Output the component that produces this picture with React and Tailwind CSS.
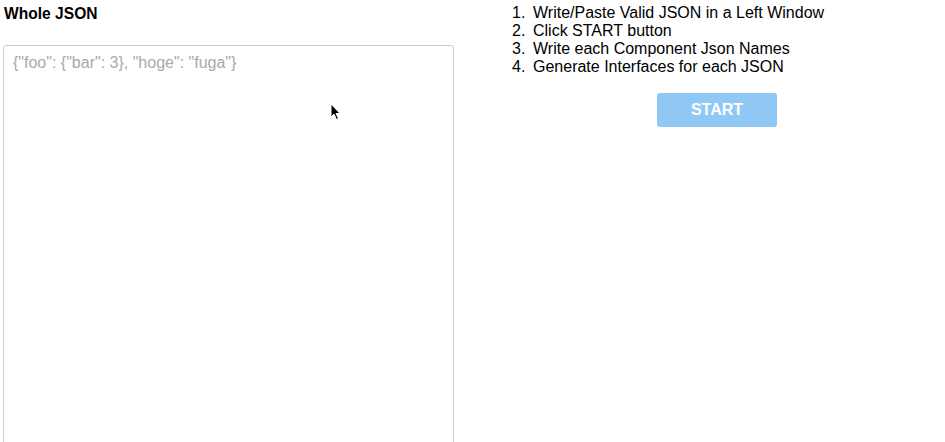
import React from 'react';

const steps = [
    'Write/Paste Valid JSON in a Left Window',
    'Click START button',
    'Write each Component Json Names',
    'Generate Interfaces for each JSON',
];

const Cursor = () => (
    <svg className="absolute left-[330px] top-[103px]" width="12" height="18" viewBox="0 0 12 18">
        <path d="M1 1 L1 14 L4 11 L6.5 16.5 L8.5 15.5 L6 10.5 L10 10.5 Z" fill="#000" stroke="#fff" strokeWidth="1" />
    </svg>
);

const App = () => {
    return (
        <div className="relative h-[442px] w-[945px] overflow-hidden bg-white font-['Liberation_Sans',Arial,sans-serif] text-black">
            <div className="flex">
                {/* LEFT: JSON INPUT */}
                <div className="w-[454px] shrink-0 pl-[3px]">
                    <h2 className="pl-[1px] pt-[5px] text-[15.6px] leading-[18px] font-bold">Whole JSON</h2>
                    <textarea
                        className="mt-[22px] h-[420px] w-[451px] resize-none rounded-[3px] border border-[#cccccc] px-[9px] py-[8px] text-[16px] leading-[18px] text-black outline-none placeholder:text-[#a9a9a9]"
                        placeholder={'{"foo": {"bar": 3}, "hoge": "fuga"}'}
                    />
                </div>

                {/* RIGHT: STEPS */}
                <div className="flex-1 pl-[58px] pt-[4px]">
                    <ol className="text-[16px] leading-[18px]">
                        {steps.map((s, i) => (
                            <li key={i} className="flex">
                                <span className="w-[21px] shrink-0">{i + 1}.</span>
                                <span>{s}</span>
                            </li>
                        ))}
                    </ol>
                    <button className="ml-[145px] mt-[17px] h-[34px] w-[120px] rounded-[3px] bg-[#90c8f5] text-[16px] font-bold text-white">
                        START
                    </button>
                </div>
            </div>
            <Cursor />
        </div>
    );
};

export default App;
